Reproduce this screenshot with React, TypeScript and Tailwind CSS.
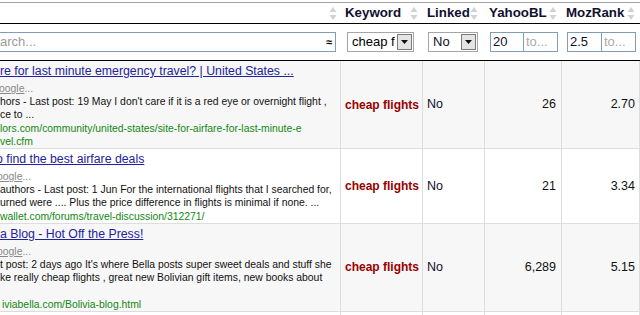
import React from "react";

function SortIcon() {
  return (
    <svg width="8" height="15" viewBox="0 0 8 15" className="shrink-0">
      <path d="M4 1 L7.5 6 L0.5 6 Z" fill="#d2d2d2" />
      <path d="M0.5 9 L7.5 9 L4 14 Z" fill="#d2d2d2" />
    </svg>
  );
}

function DropBtn() {
  return (
    <div className="w-[15px] h-[16px] border border-[#7a7a7a] bg-[#e4e4e4] flex items-center justify-center shrink-0">
      <svg width="7" height="4" viewBox="0 0 7 4">
        <path d="M0 0 L7 0 L3.5 4 Z" fill="#111" />
      </svg>
    </div>
  );
}

type Row = {
  title: string;
  titleShift: string;
  googleShift: string;
  snippet: string[];
  url: string[];
  urlShift: string;
  yahoo: string;
  moz: string;
  bg: string;
};

const rows: Row[] = [
  {
    title: "re for last minute emergency travel? | United States ...",
    titleShift: "ml-0",
    googleShift: "-ml-[1px]",
    snippet: [
      "hors - Last post: 19 May I don't care if it is a red eye or overnight flight ,",
      "ce to ...",
    ],
    url: ["lors.com/community/united-states/site-for-airfare-for-last-minute-e", "vel.cfm"],
    urlShift: "ml-0",
    yahoo: "26",
    moz: "2.70",
    bg: "bg-[#f7f7f7]",
  },
  {
    title: "o find the best airfare deals",
    titleShift: "-ml-[4px]",
    googleShift: "-ml-[3px]",
    snippet: [
      "authors - Last post: 1 Jun For the international flights that I searched for,",
      "urned were .... Plus the price difference in flights is minimal if none. ...",
    ],
    url: ["wallet.com/forums/travel-discussion/312271/"],
    urlShift: "ml-0",
    yahoo: "21",
    moz: "3.34",
    bg: "bg-white",
  },
  {
    title: "a Blog - Hot Off the Press!",
    titleShift: "ml-0",
    googleShift: "-ml-[3px]",
    snippet: [
      "t post: 2 days ago It's where Bella posts super sweet deals and stuff she",
      "ke really cheap flights , great new Bolivian gift items, new books about",
      "\u00a0",
    ],
    url: ["iviabella.com/Bolivia-blog.html"],
    urlShift: "ml-[2px]",
    yahoo: "6,289",
    moz: "5.15",
    bg: "bg-[#f7f7f7]",
  },
];

export default function App() {
  return (
    <div className="w-[640px] h-[315px] overflow-hidden bg-white font-['Liberation_Sans',Arial,sans-serif] text-[#111]">
      <div className="pt-[2px]">
        {/* header */}
        <div className="flex h-[22px] border-t border-b border-t-[#a3a3a3] border-b-black text-[13.3px] font-bold text-[#10102e]">
          <div className="w-[341px] shrink-0 flex items-center justify-end pr-[4px]">
            <SortIcon />
          </div>
          <div className="w-[82px] shrink-0 flex items-center justify-between pl-[4px] pr-[5px]">
            <span>Keyword</span>
            <SortIcon />
          </div>
          <div className="w-[62px] shrink-0 flex items-center justify-between pl-[4px] pr-[7px]">
            <span>Linked</span>
            <SortIcon />
          </div>
          <div className="w-[77px] shrink-0 flex items-center justify-between pl-[4px] pr-[5px]">
            <span>YahooBL</span>
            <SortIcon />
          </div>
          <div className="w-[78px] shrink-0 flex items-center justify-between pl-[4px] pr-[5px]">
            <span>MozRank</span>
            <SortIcon />
          </div>
        </div>

        {/* filter row */}
        <div className="flex h-[37px] border-b border-black pt-[8px] text-[13px]">
          <div className="w-[341px] shrink-0">
            <div className="-ml-[4px] w-[340px] h-[20px] border border-[#7f9db9] flex items-center justify-between pl-[3px] pr-[3px]">
              <span className="text-[#9a9a9a]">arch...</span>
              <span className="text-[11px] font-bold text-black leading-none">≈</span>
            </div>
          </div>
          <div className="w-[82px] shrink-0 pl-[6px]">
            <div className="w-[67px] h-[20px] border border-[#a5a5a5] flex items-center pl-[4px] pr-[1px] overflow-hidden">
              <span className="flex-1 overflow-hidden whitespace-nowrap text-black">cheap f</span>
              <DropBtn />
            </div>
          </div>
          <div className="w-[62px] shrink-0 pl-[5px]">
            <div className="w-[50px] h-[20px] border border-[#a5a5a5] flex items-center pl-[4px] pr-[1px]">
              <span className="flex-1 text-[#10102e]">No</span>
              <DropBtn />
            </div>
          </div>
          <div className="w-[77px] shrink-0 pl-[5px] flex">
            <div className="w-[34px] h-[20px] border border-[#7f9db9] flex items-center pl-[2px] text-[#10102e]">20</div>
            <div className="w-[34px] h-[20px] border border-l-0 border-[#7f9db9] flex items-center pl-[2px] text-[#aaaaaa]">to...</div>
          </div>
          <div className="w-[78px] shrink-0 pl-[5px] flex">
            <div className="w-[35px] h-[20px] border border-[#7f9db9] flex items-center pl-[2px] text-[#10102e]">2.5</div>
            <div className="w-[34px] h-[20px] border border-l-0 border-[#7f9db9] flex items-center pl-[2px] text-[#aaaaaa]">to...</div>
          </div>
        </div>

        {/* body */}
        {rows.map((r, i) => (
          <div key={i} className={`flex border-b border-[#dddddd] ${r.bg}`}>
            <div className="w-[341px] shrink-0 border-r border-[#dddddd] overflow-hidden pt-[3px] whitespace-nowrap">
              <div className={`text-[12.3px] leading-[15px] text-[#2222a0] underline ${r.titleShift}`}>{r.title}</div>
              <div className={`mt-[3px] text-[10.4px] leading-[13.2px] text-[#888888] ${r.googleShift}`}>
                <span className="underline">oogle</span>...
              </div>
              {r.snippet.map((s, j) => (
                <div key={j} className="text-[10.4px] leading-[13.2px] text-[#111]">{s}</div>
              ))}
              {r.url.map((u, j) => (
                <div key={j} className={`text-[10.4px] leading-[13.2px] text-[#118811] ${j === 0 ? r.urlShift : ""}`}>{u}</div>
              ))}
            </div>
            <div className="w-[82px] shrink-0 border-r border-[#dddddd] flex items-center pl-[4px] text-[12px] font-bold text-[#990000] whitespace-nowrap">
              cheap flights
            </div>
            <div className="w-[62px] shrink-0 border-r border-[#dddddd] flex items-center pl-[4px] text-[12.5px] text-[#10102e]">
              No
            </div>
            <div className="w-[77px] shrink-0 border-r border-[#dddddd] flex items-center justify-end pr-[5px] text-[12.5px] text-[#111]">
              {r.yahoo}
            </div>
            <div className="w-[78px] shrink-0 border-r border-[#dddddd] flex items-center justify-end pr-[4px] text-[12.5px] text-[#111]">
              {r.moz}
            </div>
          </div>
        ))}
        <div className="flex h-[20px] bg-white">
          <div className="w-[341px] shrink-0 border-r border-[#dddddd]" />
          <div className="w-[82px] shrink-0 border-r border-[#dddddd]" />
          <div className="w-[62px] shrink-0 border-r border-[#dddddd]" />
          <div className="w-[77px] shrink-0 border-r border-[#dddddd]" />
          <div className="w-[78px] shrink-0 border-r border-[#dddddd]" />
        </div>
      </div>
    </div>
  );
}
